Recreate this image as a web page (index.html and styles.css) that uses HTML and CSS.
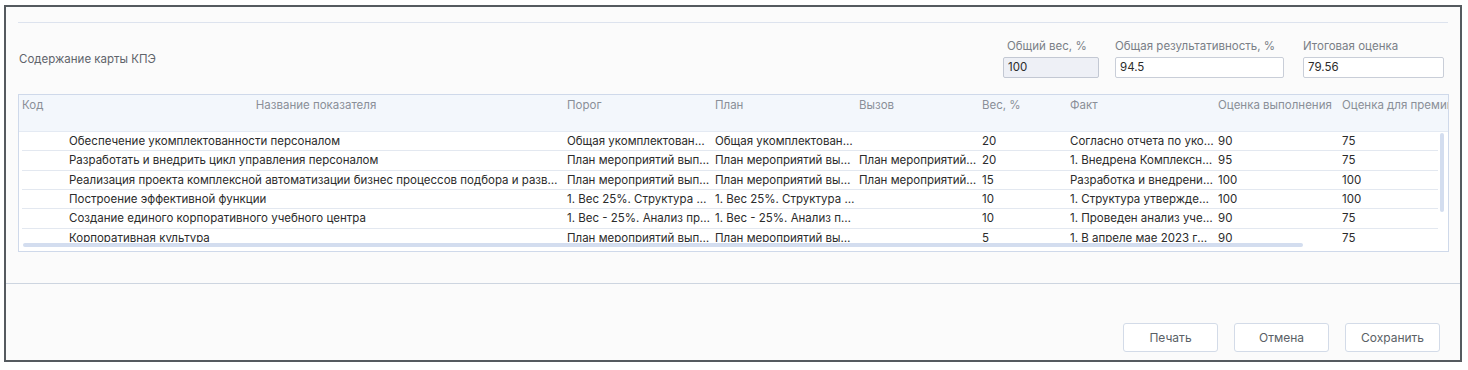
FILE: index.html
```html
<!DOCTYPE html>
<html lang="ru">
<head>
<meta charset="utf-8">
<title>Содержание карты КПЭ</title>
<link rel="stylesheet" href="styles.css">
</head>
<body>
<div class="dialog">
  <div class="top-rule"></div>
  <div class="head-row">
    <div class="title">Содержание карты КПЭ</div>
    <div class="summary">
      <div class="field f1">
        <div class="lbl lbl-ind">Общий вес, %</div>
        <div class="inp inp-dis">100</div>
      </div>
      <div class="field f2">
        <div class="lbl">Общая результативность, %</div>
        <div class="inp">94.5</div>
      </div>
      <div class="field f3">
        <div class="lbl">Итоговая оценка</div>
        <div class="inp">79.56</div>
      </div>
    </div>
  </div>

  <div class="table">
    <div class="thead">
      <div class="grid hrow">
        <div class="c">Код</div>
        <div class="c center">Название показателя</div>
        <div class="c">Порог</div>
        <div class="c">План</div>
        <div class="c">Вызов</div>
        <div class="c">Вес, %</div>
        <div class="c">Факт</div>
        <div class="c">Оценка выполнения</div>
        <div class="c">Оценка для премии</div>
      </div>
    </div>
    <div class="tbody">
      <div class="rows">
        <div class="grid row">
          <div class="c"></div>
          <div class="c">Обеспечение укомплектованности персоналом</div>
          <div class="c">Общая укомплектованность персоналом</div>
          <div class="c">Общая укомплектованность персоналом</div>
          <div class="c"></div>
          <div class="c">20</div>
          <div class="c">Согласно отчета по укомплектованности</div>
          <div class="c">90</div>
          <div class="c">75</div>
        </div>
        <div class="grid row">
          <div class="c"></div>
          <div class="c">Разработать и внедрить цикл управления персоналом</div>
          <div class="c">План мероприятий выполнен</div>
          <div class="c">План мероприятий выполнен</div>
          <div class="c">План мероприятий выполнен</div>
          <div class="c">20</div>
          <div class="c">1. Внедрена Комплексная система</div>
          <div class="c">95</div>
          <div class="c">75</div>
        </div>
        <div class="grid row">
          <div class="c"></div>
          <div class="c">Реализация проекта комплексной автоматизации бизнес процессов подбора и развития персонала</div>
          <div class="c">План мероприятий выполнен</div>
          <div class="c">План мероприятий выполнен</div>
          <div class="c">План мероприятий выполнен</div>
          <div class="c">15</div>
          <div class="c">Разработка и внедрение системы</div>
          <div class="c">100</div>
          <div class="c">100</div>
        </div>
        <div class="grid row">
          <div class="c"></div>
          <div class="c">Построение эффективной функции</div>
          <div class="c">1. Вес 25%. Структура утверждена</div>
          <div class="c">1. Вес 25%. Структура утверждена</div>
          <div class="c"></div>
          <div class="c">10</div>
          <div class="c">1. Структура утверждена и согласована</div>
          <div class="c">100</div>
          <div class="c">100</div>
        </div>
        <div class="grid row">
          <div class="c"></div>
          <div class="c">Создание единого корпоративного учебного центра</div>
          <div class="c">1. Вес - 25%. Анализ проведен</div>
          <div class="c">1. Вес - 25%. Анализ проведен</div>
          <div class="c"></div>
          <div class="c">10</div>
          <div class="c">1. Проведен анализ учебных программ</div>
          <div class="c">90</div>
          <div class="c">75</div>
        </div>
        <div class="grid row">
          <div class="c"></div>
          <div class="c">Корпоративная культура</div>
          <div class="c">План мероприятий выполнен</div>
          <div class="c">План мероприятий выполнен</div>
          <div class="c"></div>
          <div class="c">5</div>
          <div class="c">1. В апреле мае 2023 года проведено</div>
          <div class="c">90</div>
          <div class="c">75</div>
        </div>
      </div>
      <div class="vthumb"></div>
    </div>
    <div class="hscroll"><div class="hthumb"></div></div>
  </div>

  <div class="bottom-rule"></div>
  <div class="actions">
    <button class="btn">Печать</button>
    <button class="btn">Отмена</button>
    <button class="btn">Сохранить</button>
  </div>
</div>
</body>
</html>
```

FILE: styles.css
```css
html, body {
  margin: 0;
  padding: 0;
  background: #ffffff;
}

body {
  font-family: Inter, "Noto Sans", "DejaVu Sans", sans-serif;
  font-size: 11.5px;
  color: #2b2b2b;
}

.dialog {
  box-sizing: border-box;
  margin: 5px 0 0 4px;
  width: 1458px;
  height: 357px;
  border: 2px solid #555a5f;
  background: #fbfbfb;
  display: flex;
  flex-direction: column;
}

.top-rule {
  margin: 15px 12px 0 12px;
  height: 1px;
  background: #dde3ee;
}

.head-row {
  margin-top: 16px;
  height: 39px;
  display: flex;
  align-items: center;
  justify-content: space-between;
  padding: 0 16px 0 13px;
}

.title {
  color: #5f646b;
  line-height: 14px;
}

.summary {
  display: flex;
  align-items: flex-start;
}

.field {
  display: flex;
  flex-direction: column;
  gap: 4px;
}

.f1 { width: 96px; }
.f2 { width: 169px; margin-left: 16px; }
.f3 { width: 141px; margin-left: 19px; }

.lbl {
  color: #7a7f87;
  line-height: 14px;
  white-space: nowrap;
}

.lbl-ind { padding-left: 4px; }

.inp {
  box-sizing: border-box;
  height: 21px;
  border: 1px solid #c9ced8;
  border-radius: 2px;
  background: #ffffff;
  padding: 0 4px;
  line-height: 19px;
  color: #2b2b2b;
}

.inp-dis {
  background: #eef0f6;
  border-color: #c3c8d3;
}

.table {
  box-sizing: border-box;
  margin: 16px 11px 0 12px;
  height: 158px;
  border: 1px solid #cfd9ea;
  background: #ffffff;
  display: flex;
  flex-direction: column;
  overflow: hidden;
}

.grid {
  display: grid;
  grid-template-columns: 47px 498px 148px 144px 123px 88px 148px 124px 200px;
  width: 1520px;
}

.c {
  overflow: hidden;
  white-space: nowrap;
  text-overflow: ellipsis;
  padding-right: 4px;
  min-width: 0;
}

.center { text-align: center; }

.thead {
  height: 36px;
  background: #f3f7fc;
  border-bottom: 1px solid #e4eaf3;
  padding-left: 3px;
  overflow: hidden;
  flex: none;
}

.hrow {
  padding-top: 3px;
  line-height: 14px;
  color: #8a8f98;
}

.tbody {
  position: relative;
  height: 110px;
  padding: 0 10px 0 3px;
  overflow: hidden;
  flex: none;
}

.rows {
  height: 100%;
  overflow: hidden;
}

.row {
  box-sizing: border-box;
  height: 19.33px;
  border-bottom: 1px solid #e3e8f0;
  align-items: center;
  line-height: 18px;
  color: #2b2b2b;
}

.vthumb {
  position: absolute;
  left: 1421px;
  top: 1px;
  width: 4px;
  height: 79px;
  border-radius: 2px;
  background: #d3ddef;
}

.hscroll {
  position: relative;
  flex: 1;
}

.hthumb {
  position: absolute;
  left: 4px;
  top: 1px;
  width: 1280px;
  height: 4px;
  border-radius: 2px;
  background: #d3ddef;
}

.bottom-rule {
  margin-top: 31px;
  height: 1px;
  background: #cdd5e0;
}

.actions {
  margin-top: 39px;
  display: flex;
  justify-content: flex-end;
  gap: 16px;
  padding-right: 20px;
}

.btn {
  box-sizing: border-box;
  width: 95px;
  height: 29px;
  border: 1px solid #d3dbe8;
  border-radius: 3px;
  background: #ffffff;
  color: #5a5f66;
  font-family: Inter, "Noto Sans", "DejaVu Sans", sans-serif;
  font-size: 12px;
  padding: 0;
}
```
